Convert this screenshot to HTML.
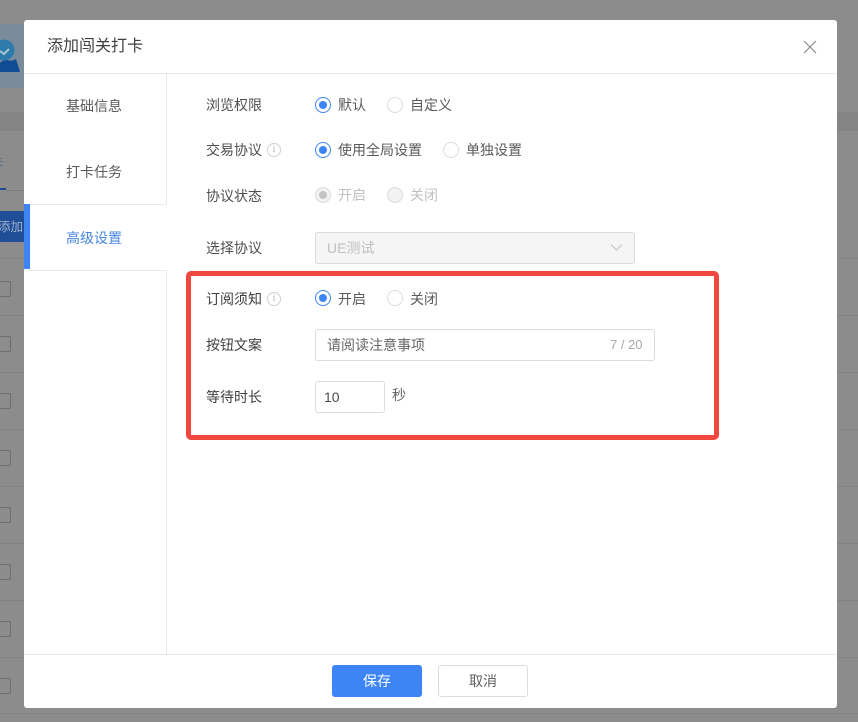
<!DOCTYPE html>
<html lang="zh">
<head>
<meta charset="utf-8">
<style>
html,body{margin:0;padding:0}
body{width:858px;height:722px;position:relative;overflow:hidden;background:#8c8c8c;font-family:"Liberation Sans","Noto Sans CJK SC",sans-serif;font-size:14px;color:#4d4d4d}
.a{position:absolute}
.t{position:absolute;white-space:nowrap;line-height:18px}
.modal{left:24px;top:20px;width:813px;height:688px;background:#fff;border-radius:3px}
.line{background:#e8e8e8}
.lab{color:#4f4f4f;font-size:14px}
.r{position:absolute;width:14px;height:14px;border-radius:50%;border:1px solid #dcdcdc;background:#fff}
.r.on{border-color:#3d85f5}
.r.on:after{content:"";position:absolute;left:3px;top:3px;width:8px;height:8px;border-radius:50%;background:#3d85f5}
.r.dis{background:#f2f2f2;border-color:#dcdcdc}
.r.dis.c:after{content:"";position:absolute;left:3px;top:3px;width:8px;height:8px;border-radius:50%;background:#c4c4c4}
.cb{position:absolute;left:-5px;width:14px;height:14px;border:1px solid #6e6e6e;border-radius:2px}
.rowl{position:absolute;left:0;width:24px;height:1px;background:#828282}
.rowr{position:absolute;left:837px;width:21px;height:1px;background:#828282}
.gray{color:#c0c0c0}
.info{position:absolute;width:12px;height:12px;border:1px solid #cfcfcf;border-radius:50%;color:#b5b5b5;font:10px/12px "Liberation Serif",serif;text-align:center}
.box{position:absolute;box-sizing:border-box;border:1px solid #dcdcdc;border-radius:3px}
</style>
</head>
<body>
<div class="a" style="left:0;top:24px;width:24px;height:64px;background:#7a8c9c"></div>
<svg class="a" style="left:0;top:38px" width="24" height="36" viewBox="0 0 24 36">
<path d="M0 34v-9c2-2 4-3 7-3 3 1 6 1 9-1l4 13z" fill="#0f4c94"/>
<circle cx="4" cy="12" r="10.5" fill="#2c7bac"/>
<path d="M0 13l4 3 5-5" fill="none" stroke="#a9c3d3" stroke-width="2"/>
</svg>
<div class="a" style="left:0;top:112px;width:24px;height:19px;background:#858585"></div>
<div class="a" style="left:837px;top:112px;width:21px;height:19px;background:#858585"></div>
<div class="t" style="left:-10px;top:154px;color:#5a6f90">卡</div>
<div class="a" style="left:0;top:188px;width:6px;height:2px;background:#1c4c94"></div>
<div class="a" style="left:6px;top:190px;width:18px;height:1px;background:#7a7a7a"></div>
<div class="a" style="left:0;top:211px;width:24px;height:31px;background:#1f4d96"></div>
<div class="a" style="left:0;top:218px;width:24px;height:20px;overflow:hidden"><div class="t" style="left:-2px;top:0;font-size:12.5px;color:#9fb2cf">添加闯</div></div>
<div class="rowl" style="top:258px"></div><div class="rowl" style="top:315px"></div><div class="rowl" style="top:372px"></div><div class="rowl" style="top:429px"></div><div class="rowl" style="top:486px"></div><div class="rowl" style="top:543px"></div><div class="rowl" style="top:600px"></div><div class="rowl" style="top:657px"></div>
<div class="rowr" style="top:258px"></div><div class="rowr" style="top:315px"></div><div class="rowr" style="top:372px"></div><div class="rowr" style="top:429px"></div><div class="rowr" style="top:486px"></div><div class="rowr" style="top:543px"></div><div class="rowr" style="top:600px"></div><div class="rowr" style="top:657px"></div>
<div class="a" style="left:0;top:713px;width:858px;height:1px;background:#828282"></div>
<div class="cb" style="top:281px"></div><div class="cb" style="top:336px"></div><div class="cb" style="top:393px"></div><div class="cb" style="top:450px"></div><div class="cb" style="top:507px"></div><div class="cb" style="top:564px"></div><div class="cb" style="top:621px"></div><div class="cb" style="top:678px"></div>

<div class="a modal"></div>
<div class="t" style="left:47px;top:37px;font-size:16px;line-height:20px;color:#3f3f3f">添加闯关打卡</div>
<svg class="a" style="left:803px;top:40px" width="14" height="14" viewBox="0 0 14 14"><path d="M1 1l12 12M13 1L1 13" stroke="#8a8a8a" stroke-width="1.2" fill="none"/></svg>
<div class="a line" style="left:24px;top:73px;width:813px;height:1px"></div>

<div class="a line" style="left:166px;top:74px;width:1px;height:130px"></div>
<div class="a line" style="left:24px;top:204px;width:143px;height:1px"></div>
<div class="a line" style="left:24px;top:270px;width:143px;height:1px"></div>
<div class="a line" style="left:166px;top:270px;width:1px;height:384px"></div>
<div class="a" style="left:24px;top:204px;width:6px;height:65px;background:#3d85f5"></div>
<div class="t" style="left:66px;top:97px;color:#595959">基础信息</div>
<div class="t" style="left:66px;top:163px;color:#595959">打卡任务</div>
<div class="t" style="left:66px;top:229px;color:#4a86e0">高级设置</div>

<div class="t lab" style="left:206px;top:96px">浏览权限</div>
<div class="r on" style="left:315px;top:97px"></div>
<div class="t" style="left:338px;top:96px;color:#5a5a5a">默认</div>
<div class="r" style="left:387px;top:97px"></div>
<div class="t" style="left:410px;top:96px;color:#5a5a5a">自定义</div>

<div class="t lab" style="left:206px;top:141px">交易协议</div>
<div class="info" style="left:267px;top:143px">i</div>
<div class="r on" style="left:315px;top:142px"></div>
<div class="t" style="left:338px;top:141px;color:#5a5a5a">使用全局设置</div>
<div class="r" style="left:443px;top:142px"></div>
<div class="t" style="left:466px;top:141px;color:#5a5a5a">单独设置</div>

<div class="t lab" style="left:206px;top:187px">协议状态</div>
<div class="r dis c" style="left:315px;top:187px"></div>
<div class="t gray" style="left:338px;top:186px">开启</div>
<div class="r dis" style="left:387px;top:187px"></div>
<div class="t gray" style="left:410px;top:186px">关闭</div>

<div class="t lab" style="left:206px;top:239px">选择协议</div>
<div class="box" style="left:315px;top:232px;width:320px;height:32px;background:#f5f5f5"></div>
<div class="t gray" style="left:327px;top:239px">UE测试</div>
<svg class="a" style="left:610px;top:243px" width="13" height="9" viewBox="0 0 13 9"><path d="M1 1.5l5.5 5.5L12 1.5" fill="none" stroke="#c4c4c4" stroke-width="1.1"/></svg>

<div class="a" style="left:186px;top:271px;width:532.5px;height:169px;box-sizing:border-box;border:5.5px solid #f0483e;border-radius:5px"></div>

<div class="t lab" style="left:206px;top:290px;color:#3f3f3f">订阅须知</div>
<div class="info" style="left:267px;top:292px">i</div>
<div class="r on" style="left:315px;top:290px"></div>
<div class="t" style="left:338px;top:290px;color:#5a5a5a">开启</div>
<div class="r" style="left:387px;top:290px"></div>
<div class="t" style="left:410px;top:290px;color:#5a5a5a">关闭</div>

<div class="t lab" style="left:206px;top:336px;color:#3f3f3f">按钮文案</div>
<div class="box" style="left:315px;top:329px;width:340px;height:32px"></div>
<div class="t" style="left:327px;top:336px;color:#666">请阅读注意事项</div>
<div class="t" style="left:610px;top:336px;font-size:13px;color:#a8a8a8">7 / 20</div>

<div class="t lab" style="left:206px;top:388px;color:#3f3f3f">等待时长</div>
<div class="box" style="left:315px;top:381px;width:70px;height:32px"></div>
<div class="t" style="left:324px;top:388px;font-size:14px;color:#4d4d4d">10</div>
<div class="t" style="left:392px;top:386px;color:#666">秒</div>

<div class="a line" style="left:24px;top:654px;width:813px;height:1px"></div>
<div class="a" style="left:332px;top:665px;width:90px;height:32px;background:#3d85f5;border-radius:3px;color:#fff;font-size:14px;line-height:32px;text-align:center">保存</div>
<div class="box" style="left:438px;top:665px;width:90px;height:32px;color:#5f5f5f;font-size:14px;line-height:30px;text-align:center">取消</div>
</body>
</html>
